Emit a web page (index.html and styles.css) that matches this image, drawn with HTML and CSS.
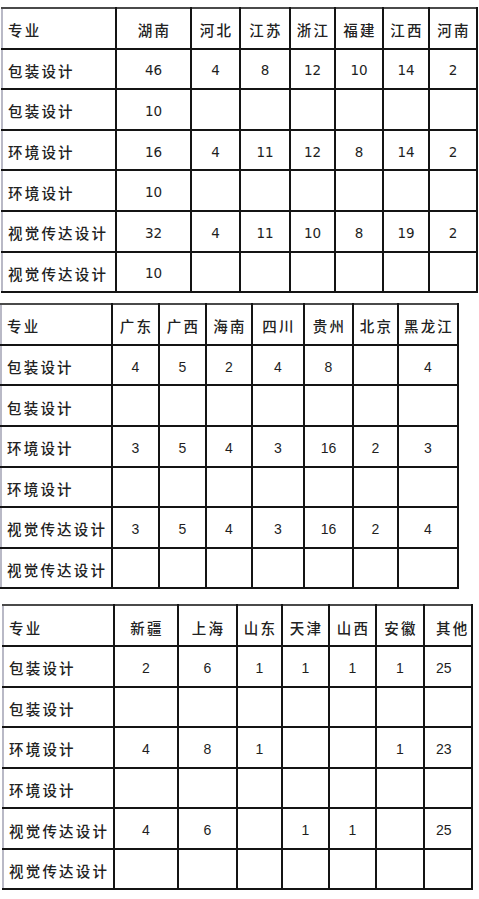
FILE: index.html
```html
<!DOCTYPE html>
<html lang="zh">
<head>
<meta charset="utf-8">
<title>专业分布</title>
<link rel="stylesheet" href="styles.css">
</head>
<body>
<div class="page">
  <table class="grid t1">
    <colgroup>
      <col class="c114"><col class="c75"><col class="c49"><col class="c50"><col class="c45"><col class="c48"><col class="c46"><col class="c48">
    </colgroup>
    <tr><td class="name">专业</td><td class="hd">湖南</td><td class="hd">河北</td><td class="hd">江苏</td><td class="hd">浙江</td><td class="hd">福建</td><td class="hd">江西</td><td class="hd">河南</td></tr>
    <tr><td class="name">包装设计</td><td>46</td><td>4</td><td>8</td><td>12</td><td>10</td><td>14</td><td>2</td></tr>
    <tr><td class="name">包装设计</td><td>10</td><td></td><td></td><td></td><td></td><td></td><td></td></tr>
    <tr><td class="name">环境设计</td><td>16</td><td>4</td><td>11</td><td>12</td><td>8</td><td>14</td><td>2</td></tr>
    <tr><td class="name">环境设计</td><td>10</td><td></td><td></td><td></td><td></td><td></td><td></td></tr>
    <tr><td class="name">视觉传达设计</td><td>32</td><td>4</td><td>11</td><td>10</td><td>8</td><td>19</td><td>2</td></tr>
    <tr><td class="name">视觉传达设计</td><td>10</td><td></td><td></td><td></td><td></td><td></td><td></td></tr>
  </table>

  <table class="grid t2">
    <colgroup>
      <col class="c111"><col class="c47"><col class="c47"><col class="c46"><col class="c52"><col class="c49"><col class="c45"><col class="c60">
    </colgroup>
    <tr><td class="name">专业</td><td class="hd">广东</td><td class="hd">广西</td><td class="hd">海南</td><td class="hd">四川</td><td class="hd">贵州</td><td class="hd">北京</td><td class="hd">黑龙江</td></tr>
    <tr><td class="name">包装设计</td><td>4</td><td>5</td><td>2</td><td>4</td><td>8</td><td></td><td>4</td></tr>
    <tr><td class="name">包装设计</td><td></td><td></td><td></td><td></td><td></td><td></td><td></td></tr>
    <tr><td class="name">环境设计</td><td>3</td><td>5</td><td>4</td><td>3</td><td>16</td><td>2</td><td>3</td></tr>
    <tr><td class="name">环境设计</td><td></td><td></td><td></td><td></td><td></td><td></td><td></td></tr>
    <tr><td class="name">视觉传达设计</td><td>3</td><td>5</td><td>4</td><td>3</td><td>16</td><td>2</td><td>4</td></tr>
    <tr><td class="name">视觉传达设计</td><td></td><td></td><td></td><td></td><td></td><td></td><td></td></tr>
  </table>

  <table class="grid t3">
    <colgroup>
      <col class="c111"><col class="c64"><col class="c59"><col class="c45"><col class="c47"><col class="c47"><col class="c48"><col class="c48">
    </colgroup>
    <tr><td class="name">专业</td><td class="hd">新疆</td><td class="hd">上海</td><td class="hd">山东</td><td class="hd">天津</td><td class="hd">山西</td><td class="hd">安徽</td><td class="hd left">其他</td></tr>
    <tr><td class="name">包装设计</td><td>2</td><td>6</td><td>1</td><td>1</td><td>1</td><td>1</td><td class="left">25</td></tr>
    <tr><td class="name">包装设计</td><td></td><td></td><td></td><td></td><td></td><td></td><td></td></tr>
    <tr><td class="name">环境设计</td><td>4</td><td>8</td><td>1</td><td></td><td></td><td>1</td><td class="left">23</td></tr>
    <tr><td class="name">环境设计</td><td></td><td></td><td></td><td></td><td></td><td></td><td></td></tr>
    <tr><td class="name">视觉传达设计</td><td>4</td><td>6</td><td></td><td>1</td><td>1</td><td></td><td class="left">25</td></tr>
    <tr><td class="name">视觉传达设计</td><td></td><td></td><td></td><td></td><td></td><td></td><td></td></tr>
  </table>
</div>
</body>
</html>
```

FILE: styles.css
```css
html, body {
  margin: 0;
  padding: 0;
  background: #ffffff;
}

.page {
  display: flex;
  flex-direction: column;
  align-items: flex-start;
  padding-top: 7px;
}

.grid {
  border-collapse: collapse;
  table-layout: fixed;
  color: #1e1e1e;
  font-family: "DejaVu Sans", "Noto Sans CJK SC", sans-serif;
  font-size: 13.5px;
  border-top: 2px solid #4a4a4a;
  border-left: 2px solid #b9b9c6;
}

.grid tr {
  height: 40.6px;
}

.grid td {
  border: 2px solid #141414;
  padding: 3px 0 0 0;
  text-align: center;
  vertical-align: middle;
  white-space: nowrap;
  overflow: hidden;
}

.grid tr:first-child td {
  border-top-color: #4a4a4a;
}

.grid td:first-child {
  border-left-color: #b9b9c6;
}

.grid .name,
.grid .hd {
  font-family: "Noto Sans CJK SC", sans-serif;
  font-size: 14.5px;
  font-weight: 500;
  letter-spacing: 2.2px;
  color: #222222;
}

.grid .name {
  text-align: left;
  padding-left: 5px;
}

.grid .hd {
  padding-left: 2px;
}

.grid .left {
  text-align: left;
  padding-left: 11px;
}

.t1 {
  width: 477px;
  margin-left: 1px;
}

.t2 {
  width: 459px;
  margin-top: 10px;
  margin-left: 0;
  font-family: "Liberation Sans", "Noto Sans CJK SC", sans-serif;
  font-size: 14px;
}

.t3 {
  width: 471px;
  margin-top: 15px;
  margin-left: 2px;
  font-family: "Liberation Sans", "Noto Sans CJK SC", sans-serif;
  font-size: 14px;
}

.c114 { width: 114px; }
.c111 { width: 111px; }
.c75 { width: 75px; }
.c64 { width: 64px; }
.c60 { width: 60px; }
.c59 { width: 59px; }
.c52 { width: 52px; }
.c50 { width: 50px; }
.c49 { width: 49px; }
.c48 { width: 48px; }
.c47 { width: 47px; }
.c46 { width: 46px; }
.c45 { width: 45px; }
```
